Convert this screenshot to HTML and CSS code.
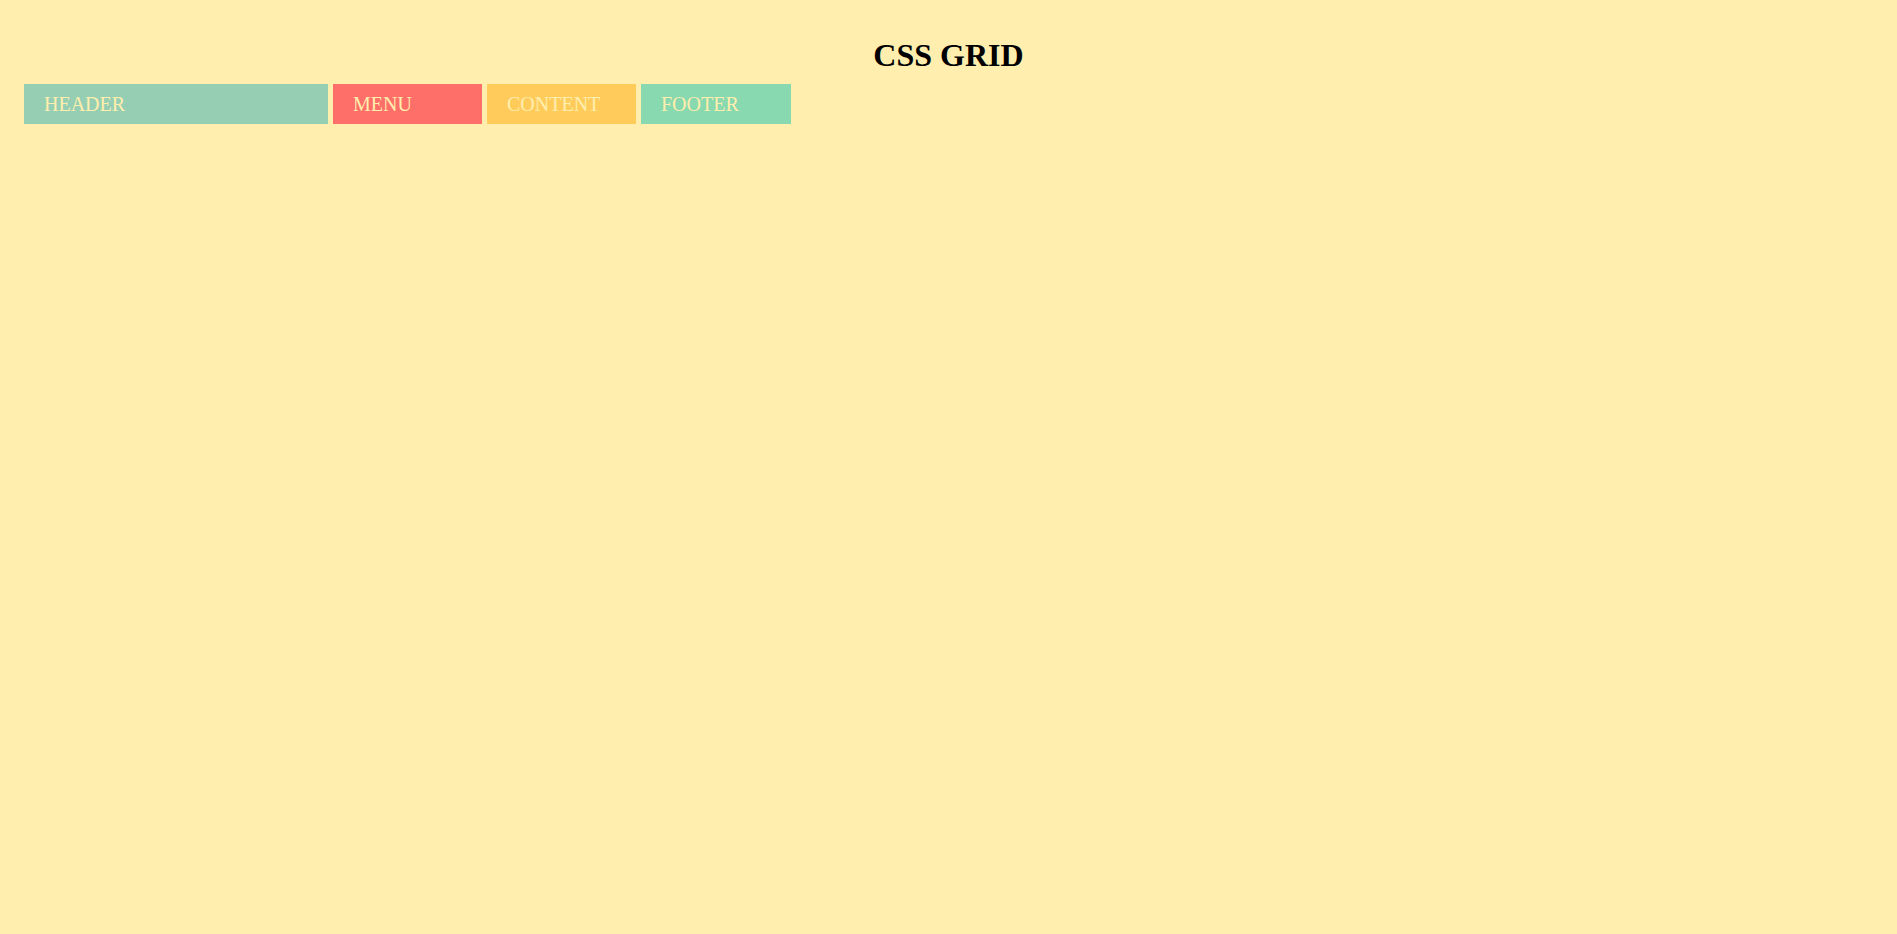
FILE: index.html
```html
<!DOCTYPE html>
<html>
<head>
<meta charset="utf-8">
<link rel="stylesheet" href="styles.css">
</head>
<body>
<div class="page">
  <h1 class="title">CSS GRID</h1>
  <div class="grid">
    <div class="item header">HEADER</div>
    <div class="item menu">MENU</div>
    <div class="item content">CONTENT</div>
    <div class="item footer">FOOTER</div>
  </div>
</div>
</body>
</html>
```
FILE: styles.css
```css
html, body {
  margin: 0;
  padding: 0;
  background: #ffeead;
  height: 100%;
}
body {
  font-family: "Liberation Serif", "Times New Roman", serif;
}
.page {
  padding: 37px 24px 0 24px;
}
.title {
  margin: 0 0 10px 0;
  font-size: 32px;
  line-height: 37px;
  font-weight: bold;
  text-align: center;
  color: #000;
}
.grid {
  display: grid;
  grid-template-columns: 304px 149px 149px 150px;
  column-gap: 5px;
}
.item {
  padding: 9px 20px;
  font-size: 20px;
  line-height: 22px;
  color: #ffeead;
}
.header { background: #96ceb4; }
.menu { background: #ff6f69; }
.content { background: #ffcc5c; }
.footer { background: #88d8b0; }
```
